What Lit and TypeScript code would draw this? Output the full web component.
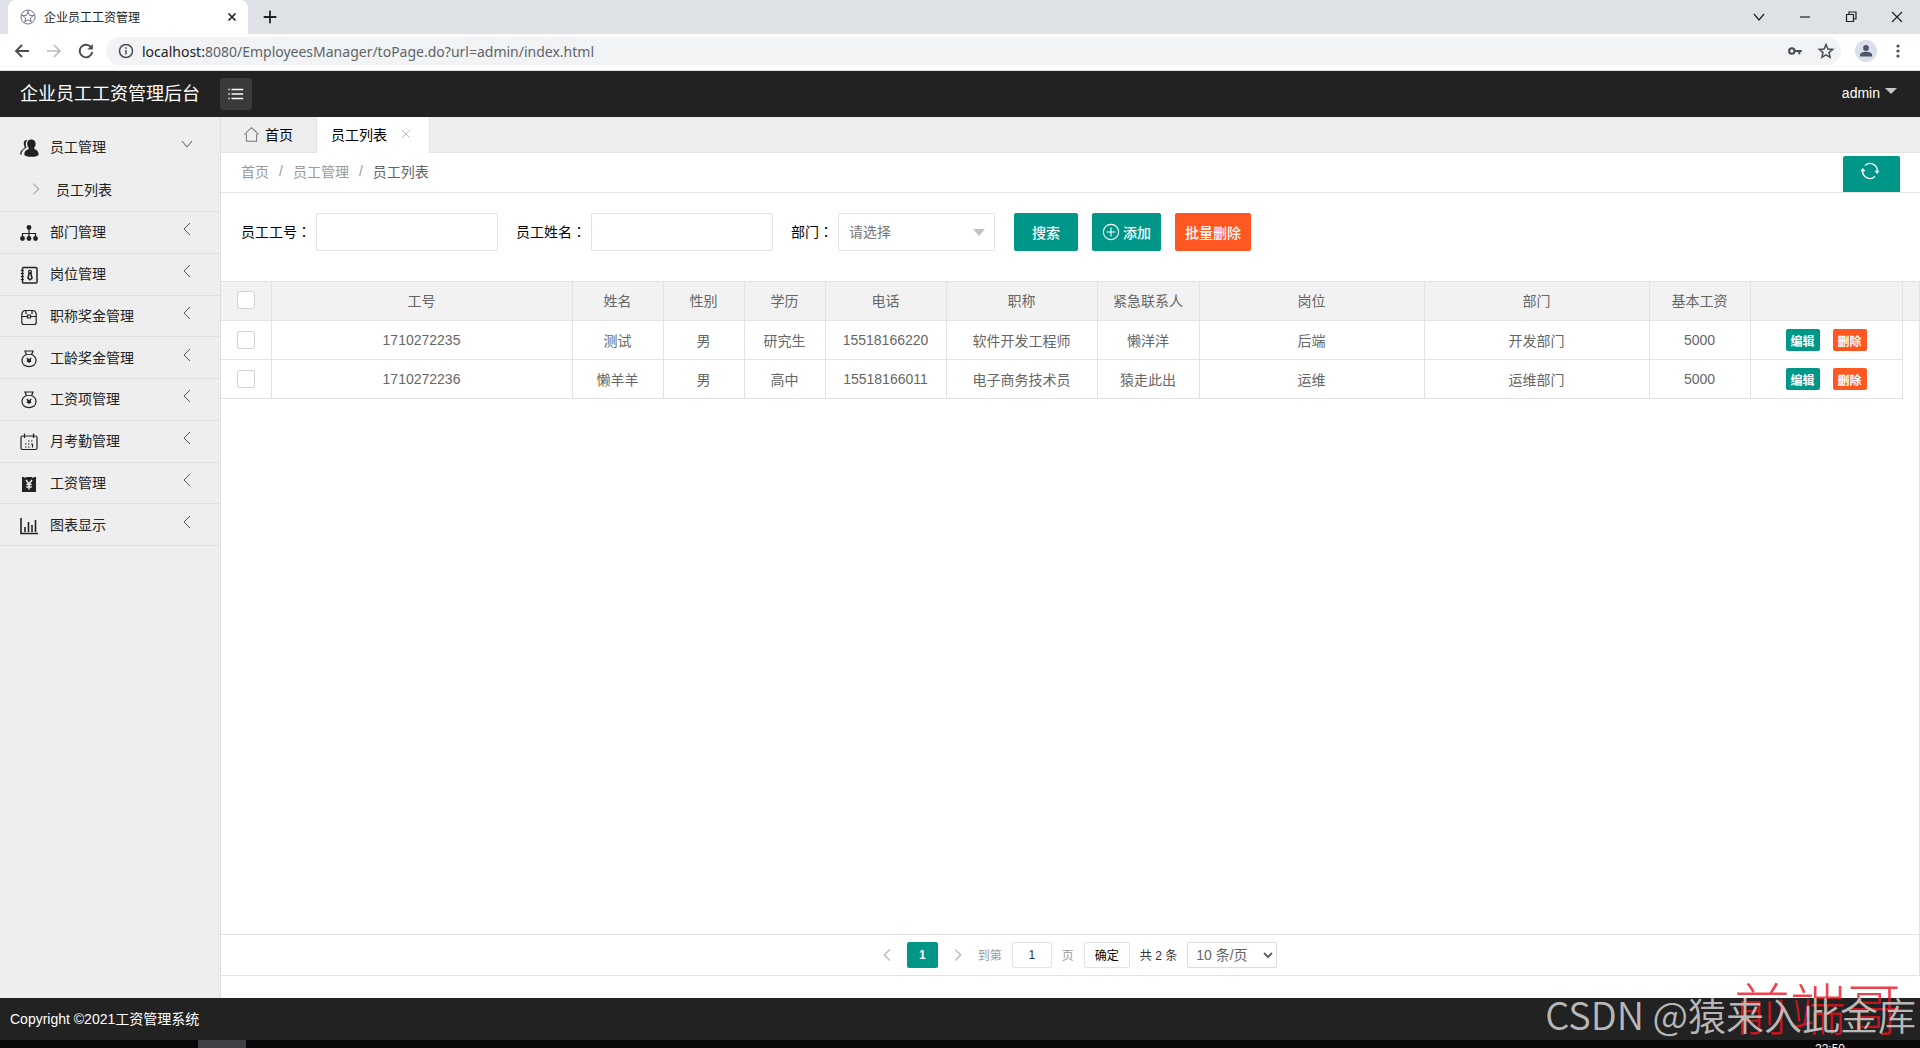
import { LitElement, html, svg, css } from "lit";
import { customElement, state } from "lit/decorators.js";

const stroke = (body: unknown, size = 20, width = 1.2) => html`<svg width=${size} height=${size} viewBox="0 0 20 20" fill="none" stroke="currentColor" stroke-width=${width} aria-hidden="true">${body}</svg>`;

const icons = {
  users: svg`<g fill="currentColor" stroke="none"><path d="M8.500 2C6 1.500 4.600 3 4.800 5.600c.1 1.700.4 2.700 1.100 3.600L4.200 11C1.500 12.500.9 14.800 1.200 16.500H2.600c0-3 1-4.600 3.300-5.800L7.600 9.600C6.300 7.500 6.200 4.300 8.500 2z"/><path d="M12.200 1.500c3.200 0 4.600 2.200 4.400 4.800-.1 1.600-.7 2.900-1.600 3.800.4 1.100 1.200 1.300 2.300 1.900 2 1.100 2.300 3 2.200 4.900-1.200 1.200-4 1.900-7 1.900-3.200 0-5.800-.7-7.200-1.900 0-2.500.3-4 2.500-5 1.200-.6 1.800-.8 2.100-1.900C8.900 9.100 8.300 7.900 8.200 6.300 8 3.700 9.200 1.500 12.200 1.500z"/></g>`,
  tree: svg`<path d="M10 5v10M3.500 14v-3.500h13V14"/><g fill="currentColor" stroke="none"><circle cx="10" cy="4.500" r="2.400"/><circle cx="3.500" cy="15.500" r="2.400"/><circle cx="10" cy="15.500" r="2.400"/><circle cx="16.500" cy="15.500" r="2.400"/></g>`,
  badge: svg`<rect x="3.500" y="2.500" width="14.500" height="15.500" rx="1" stroke-width="1.500"/><path d="M1.800 5.500h3M1.800 8.500h3M1.800 11.500h3M1.800 14.500h3"/><circle cx="11" cy="6.700" r="1.400"/><path d="M10.100 8.300h1.800l1.100 4.800-2 1.700-2-1.700z" stroke-width="1.600"/>`,
  box: svg`<path d="M5.500 3.500h9q2.700 1 2.700 4v8q0 2-2 2H4.800q-2 0-2-2v-8q0-3 2.700-4z"/><path d="M2.800 9.500h5.700m3 0h5.700M8.500 8h3v3h-3zM7 3.700v3.300m6-3.300v3.300"/>`,
  pouch: svg`<path d="M6 2h8l-1.400 3.500C15.500 6.800 17 9 17 11.600c0 3.800-3 6-7 6s-7-2.200-7-6c0-2.600 1.500-4.800 4.400-6.100z"/><path d="M8 5.500h4" stroke-width=".8"/><circle cx="10" cy="11.500" r="1.800" fill="currentColor" stroke="none"/><path d="m7.800 9 2.200 2.500L12.200 9M10 11.500V14M7.800 12.300h4.400"/>`,
  calendar: svg`<rect x="2" y="4" width="16" height="13.500" rx="1.500"/><path d="M5.500 1.500v4.500m9-4.500v4.500"/><path d="M9 9h1.500M12 9h1.500M6 12h1.500M9 12h1.500M12 12h1.500M6 15h1.500M9 15h1.500M13.500 12v3.500"/>`,
  money: svg`<path d="M3 3h2l1 1 1.300-1h5.400l1.300 1 1-1h2v15H3z" fill="currentColor" stroke="none"/><path d="m7 6 3 4 3-4M10 10v5.500M7.300 10.500h5.400M7.300 13h5.400" stroke="#eee" stroke-width="1.500"/>`,
  chart: svg`<path d="M2 2v15.500h17M6 16v-5M9.500 16V6M13 16V9M16.500 16V4" stroke-width="1.600"/>`,
};

const down = svg`<path d="m5 7 5 6 5-6"/>`;
const left = svg`<path d="m13 4-6 6 6 6"/>`;
const right = svg`<path d="m7 4 6 6-6 6"/>`;
const cross = svg`<path d="m5 5 10 10M15 5 5 15"/>`;

const menu = [
  ["部门管理", icons.tree], ["岗位管理", icons.badge], ["职称奖金管理", icons.box], ["工龄奖金管理", icons.pouch],
  ["工资项管理", icons.pouch], ["月考勤管理", icons.calendar], ["工资管理", icons.money], ["图表显示", icons.chart],
] as const;

const columns = ["工号", "姓名", "性别", "学历", "电话", "职称", "紧急联系人", "岗位", "部门", "基本工资"];
const employees = [
  ["1710272235", "测试", "男", "研究生", "15518166220", "软件开发工程师", "懒洋洋", "后端", "开发部门", "5000"],
  ["1710272236", "懒羊羊", "男", "高中", "15518166011", "电子商务技术员", "猿走此出", "运维", "运维部门", "5000"],
];

const base = css`
  * { box-sizing: border-box; }
  button, input, select { font: inherit; color: inherit; margin: 0; padding: 0; }
  button { border: 0; background: none; cursor: pointer; display: flex; align-items: center; justify-content: center; }
  a { color: inherit; text-decoration: none; }
  svg { display: block; flex: none; }
`;

@customElement("browser-bar")
class BrowserBar extends LitElement {
  static styles = [base, css`
    :host { display: block; }
    .strip { height: 34px; background: #dee1e6; display: flex; align-items: center; padding-left: 8px; color: #222; }
    .tab { width: 240px; height: 34px; background: #fff; border-radius: 8px 8px 0 0; display: flex; align-items: center; gap: 8px; padding: 0 9px 0 12px; font-size: 12px; }
    .tab span { flex: 1; padding-bottom: 2px; }
    .fav { color: #6c7196; }
    .plus { margin-left: 13px; }
    .window { margin-left: auto; display: flex; gap: 26px; padding-right: 13px; height: 28px; }
    .tools { height: 37px; background: #fff; display: flex; align-items: center; gap: 12px; padding: 0 12px 2px; color: #4a4d51; border-bottom: 1px solid #ddd; }
    .off { color: #b8babd; }
    .address { flex: 1; height: 28px; border-radius: 14px; background: #f1f3f4; display: flex; align-items: center; gap: 6px; padding: 0 5px 0 10px; margin-left: -2px; }
    .link { flex: 1; font: 14px "Noto Sans", sans-serif; color: #5f6368; }
    .link b { font-weight: 400; color: #202124; }
    .key { margin-right: 6px; }
    .avatar { margin: 0 -1px 0 2px; }
  `];

  render() {
    return html`
      <div class="strip">
        <div class="tab">
          <svg class="fav" width="16" height="16" viewBox="0 0 16 16" fill="none" stroke="currentColor"><circle cx="8" cy="8" r="7"/><path d="m8 3 1.500 3.300 3.500.4-2.600 2.400.7 3.600L8 10.900l-3.100 1.800.7-3.600L3 6.700l3.500-.4zM8 1v2M1.300 6 3 6.700M14.700 6 13 6.700M3.800 14l1.100-1.300M12.200 14l-1.100-1.300"/></svg>
          <span>企业员工工资管理</span>
          <button aria-label="关闭标签页">${stroke(cross, 14, 2.4)}</button>
        </div>
        <button class="plus" aria-label="新标签页">${stroke(svg`<path d="M10 3v14M3 10h14"/>`, 18, 2)}</button>
        <div class="window">
          <button aria-label="搜索标签页">${stroke(down, 20, 1.2)}</button>
          <button aria-label="最小化">${stroke(svg`<path d="M5 10h10"/>`, 20, 1.2)}</button>
          <button aria-label="还原">${stroke(svg`<path d="M5.500 7.500h7v7h-7zM8 7.500v-2.500h7v7h-2.500"/>`, 20, 1.2)}</button>
          <button aria-label="关闭">${stroke(cross, 20, 1.2)}</button>
        </div>
      </div>
      <div class="tools">
        <button aria-label="后退">${stroke(svg`<path d="M17 10H4M10 4l-6 6 6 6"/>`, 20, 1.9)}</button>
        <button class="off" aria-label="前进">${stroke(svg`<path d="M3 10h13M10 4l6 6-6 6"/>`, 20, 1.6)}</button>
        <button aria-label="刷新">${stroke(svg`<path d="M15.500 7A6.300 6.300 0 1 0 16.200 11"/><path d="M16.800 3v5.500h-5.500z" fill="currentColor" stroke="none"/>`, 20, 1.9)}</button>
        <div class="address">
          ${stroke(svg`<circle cx="10" cy="10" r="6.500"/><path d="M10 9v4.500M10 6.200v1.600"/>`, 20, 1.5)}
          <span class="link"><b>localhost:</b>8080/EmployeesManager/toPage.do?url=admin/index.html</span>
          <button class="key" aria-label="密码">${stroke(svg`<circle cx="6.500" cy="10" r="3" stroke-width="2.300"/><path d="M9.500 10h8M14.800 10v3.500" stroke-width="2.300"/>`, 18)}</button>
          <button aria-label="收藏">${stroke(svg`<path d="m10 3.500 1.900 4.500 4.800.4-3.700 3.200 1.100 4.700L10 13.800l-4.100 2.500L7 11.600 3.300 8.400 8.100 8z"/>`, 20, 1.5)}</button>
        </div>
        <button class="avatar" aria-label="用户"><svg width="22" height="22" viewBox="0 0 22 22"><circle cx="11" cy="11" r="11" fill="#d9dfeb"/><circle cx="11" cy="8" r="2.900" fill="#4d566b"/><path d="M5 16.500v-1.500c0-2 3-3.200 6-3.200s6 1.200 6 3.200v1.500z" fill="#4d566b"/></svg></button>
        <button aria-label="更多"><svg width="20" height="20" viewBox="0 0 20 20" fill="currentColor"><circle cx="10" cy="5" r="1.600"/><circle cx="10" cy="10" r="1.600"/><circle cx="10" cy="15" r="1.600"/></svg></button>
      </div>`;
  }
}

@customElement("side-menu")
class SideMenu extends LitElement {
  static styles = [base, css`
    :host { display: block; width: 221px; background: #eee; border-right: 1px solid #ddd; color: #222; font-size: 14px; }
    .group { padding-top: 8px; height: 95px; border-bottom: 1px solid #e0e0e0; }
    .list { display: grid; grid-auto-rows: 1fr; height: 334px; }
    .item { width: 100%; height: 100%; border-bottom: 1px solid #e0e0e0; gap: 11px; padding: 0 23px 0 19px; }
    .group .item { height: 44px; border: 0; }
    .label { flex: 1; text-align: left; padding-bottom: 2px; }
    .arrow { margin-bottom: 6px; color: #555; }
    .icon { margin-top: 2px; }
    .sub { display: flex; align-items: center; gap: 11px; height: 40px; padding-left: 27px; }
    .sub svg { color: #777; }
  `];

  render() {
    return html`<nav>
      <div class="group">
        <button class="item"><span class="icon">${stroke(icons.users)}</span><span class="label">员工管理</span><span class="arrow">${stroke(down, 20, 1)}</span></button>
        <a class="sub" href="#staff">${stroke(right, 18, 1)}员工列表</a>
      </div>
      <div class="list">
        ${menu.map(([name, icon]) => html`<button class="item"><span class="icon">${stroke(icon)}</span><span class="label">${name}</span><span class="arrow">${stroke(left, 20, 1)}</span></button>`)}
      </div>
    </nav>`;
  }
}

@customElement("staff-table")
class StaffTable extends LitElement {
  static styles = [base, css`
    :host { display: block; font-size: 14px; color: #666; }
    table { width: 100%; table-layout: fixed; border-collapse: collapse; }
    th, td { height: 39px; padding: 0; font-weight: 400; text-align: center; border: 1px solid #e3e3e3; white-space: nowrap; }
    th { background: #f2f2f2; padding-bottom: 2px; }
    tr > :first-child { border-left: 0; }
    th:last-child { border-right: 0; }
    td.pad { border: 0; }
    .check { width: 50px; } .id { width: 301px; } .name { width: 91px; } .short { width: 81px; } .phone { width: 121px; }
    .title { width: 151px; } .contact { width: 102px; } .pay { width: 101px; } .acts { width: 152px; } .gutter { width: 17px; }
    input { appearance: none; display: block; width: 18px; height: 18px; margin: 0 0 0 16px; border: 1px solid #d2d2d2; border-radius: 2px; background: #fff; }
    .buttons { display: flex; justify-content: center; gap: 13px; }
    .buttons button { width: 34px; height: 22px; border-radius: 2px; background: #009688; color: #fff; font-size: 12px; font-weight: 700; }
    .buttons .remove { background: #ff5722; }
  `];

  render() {
    return html`<table>
      <colgroup><col class="check"><col class="id"><col class="name"><col class="short"><col class="short"><col class="phone"><col class="title"><col class="contact"><col><col><col class="pay"><col class="acts"><col class="gutter"></colgroup>
      <thead><tr><th><input type="checkbox" aria-label="全选"></th>${columns.map((c) => html`<th>${c}</th>`)}<th></th><th></th></tr></thead>
      <tbody>${employees.map((row) => html`<tr>
        <td><input type="checkbox" aria-label=${"选择 " + row[0]}></td>${row.map((v) => html`<td>${v}</td>`)}
        <td><div class="buttons"><button>编辑</button><button class="remove">删除</button></div></td><td class="pad"></td>
      </tr>`)}</tbody>
    </table>`;
  }
}

@customElement("staff-page")
class StaffPage extends LitElement {
  @state() private pageNumber = "1";

  static styles = [base, css`
    :host { display: flex; flex-direction: column; min-width: 0; background: #fff; font-size: 14px; color: #222; }
    .tabs { display: flex; height: 36px; background: #eee; border-bottom: 1px solid #e2e2e2; }
    .tab { display: flex; align-items: center; gap: 5px; height: 36px; padding: 0 23px 2px 22px; border-right: 1px solid #e2e2e2; color: #000; }
    .tab.on { background: #fff; padding: 0 15px 2px 14px; gap: 11px; }
    .tab svg { color: #777; }
    .tab.on svg { color: #bbb; }
    .crumbs { display: flex; align-items: center; gap: 10px; height: 40px; border-bottom: 1px solid #e5e5e5; padding: 0 20px; color: #999; }
    .crumbs a, .crumbs span { padding-bottom: 3px; }
    .crumbs .here { color: #666; }
    .refresh { margin-left: auto; align-self: flex-end; width: 57px; height: 36px; border-radius: 2px 2px 0 0; background: #009688; color: #fff; padding: 0 3px 7px 0; }
    .search { display: flex; align-items: center; height: 88px; padding: 0 20px 10px; }
    .search label { margin-right: 5px; padding-bottom: 3px; color: #000; }
    .colon { font-family: "Noto Sans CJK TC", sans-serif; }
    .box { height: 38px; border: 1px solid #e2e2e2; border-radius: 2px; background: #fff; padding: 0 10px; outline: 0; }
    .box.text { width: 182px; margin-right: 18px; }
    .pick { display: grid; align-items: center; margin-right: 19px; }
    .pick > * { grid-area: 1 / 1; }
    .pick select { appearance: none; width: 157px; color: #777; }
    .pick svg { justify-self: end; margin-right: 10px; pointer-events: none; }
    .btn { height: 38px; border-radius: 2px; padding: 0 10px; margin-right: 14px; background: #009688; color: #fff; font-weight: 500; gap: 3px; }
    .btn.find { padding: 0 18px; }
    .btn.danger { background: #ff5722; }
    .grid { flex: 1; border-right: 1px solid #e3e3e3; }
    .pager { height: 42px; display: flex; align-items: center; justify-content: center; gap: 10px; border: 1px solid #e2e2e2; border-left: 0; font-size: 12px; padding: 0 0 1px 14px; color: #333; }
    .pager .soft { color: #999; }
    .pager .edge { color: #bbb; width: 20px; }
    .pager .now { width: 31px; height: 26px; border-radius: 2px; background: #009688; color: #fff; font-weight: 700; }
    .pager input { width: 40px; height: 26px; border: 1px solid #e2e2e2; border-radius: 2px; text-align: center; }
    .pager .ok { width: 46px; height: 26px; border: 1px solid #e2e2e2; border-radius: 2px; color: #000; }
    .pager select { width: 90px; height: 26px; border: 1px solid #ddd; border-radius: 2px; padding-left: 4px; font-size: 14px; color: #666; background: #fff; }
    .rest { height: 22px; }
  `];

  render() {
    return html`
      <div class="tabs">
        <a class="tab" href="#home">${stroke(svg`<path d="m1.500 10 8.500-8 8.500 8M4 9v9h12V9"/>`, 17, 1.2)}首页</a>
        <a class="tab on" href="#staff">员工列表 ${stroke(cross, 16, 1.2)}</a>
      </div>
      <div class="crumbs">
        <a href="#home">首页</a><span>/</span><a href="#group">员工管理</a><span>/</span><span class="here">员工列表</span>
        <button class="refresh" aria-label="刷新">${stroke(svg`<path d="M5 4.500A7.300 7.300 0 0 1 17.200 11M15 15.500A7.300 7.300 0 0 1 2.800 9"/><path d="m19.500 9.500-2.200 3.500L14.500 10zM.5 10.500 2.700 7l2.800 3z" fill="currentColor" stroke="none"/>`, 20, 1.3)}</button>
      </div>
      <form class="search" @submit=${(e: Event) => e.preventDefault()}>
        <label for="no">员工工号<span class="colon">：</span></label><input class="box text" id="no">
        <label for="name">员工姓名<span class="colon">：</span></label><input class="box text" id="name">
        <label for="dept">部门<span class="colon">：</span></label>
        <div class="pick"><select class="box" id="dept"><option>请选择</option><option>开发部门</option><option>运维部门</option></select><svg width="12" height="7" viewBox="0 0 12 7"><path d="M0 0h12L6 7z" fill="#c2c2c2"/></svg></div>
        <button class="btn find">搜索</button>
        <button class="btn" type="button">${stroke(svg`<circle cx="10" cy="10" r="8.500"/><path d="M10 5v10M5 10h10"/>`, 18, 1.2)}添加</button>
        <button class="btn danger" type="button">批量删除</button>
      </form>
      <div class="grid"><staff-table></staff-table></div>
      <div class="pager">
        <button class="edge" aria-label="上一页">${stroke(left, 18, 1.6)}</button>
        <button class="now">1</button>
        <button class="edge" aria-label="下一页">${stroke(right, 18, 1.6)}</button>
        <label class="soft" for="page">到第</label>
        <input id="page" .value=${this.pageNumber} @input=${(e: Event) => (this.pageNumber = (e.target as HTMLInputElement).value)}>
        <span class="soft">页</span>
        <button class="ok">确定</button>
        <span>共 2 条</span>
        <select aria-label="每页条数"><option>10 条/页</option><option>20 条/页</option></select>
      </div>
      <div class="rest"></div>`;
  }
}

@customElement("app-root")
class AppRoot extends LitElement {
  static styles = [base, css`
    :host { display: flex; flex-direction: column; position: relative; min-height: 100vh; overflow: hidden; background: #fff; font-family: "Liberation Sans", "Noto Sans CJK SC", sans-serif; }
    .top { height: 46px; background: #222; color: #fff; display: flex; align-items: center; padding: 0 23px 0 20px; }
    h1 { margin: 0; font-size: 18px; font-weight: 400; padding-bottom: 4px; }
    .fold { width: 32px; height: 32px; margin-left: 20px; border-radius: 3px; background: #3a3a3a; color: #fff; }
    .user { margin-left: auto; gap: 5px; font-size: 14px; color: #fff; padding-bottom: 2px; }
    .user svg { margin-bottom: 4px; }
    .main { flex: 1; display: grid; grid-template-columns: auto 1fr; }
    .foot { height: 42px; background: #222; color: #fff; display: flex; align-items: center; padding: 0 10px 2px; font-size: 14px; }
    .task { height: 8px; background: #08080b; display: flex; justify-content: space-between; overflow: hidden; padding: 0 75px 0 198px; color: #fff; font-size: 12px; line-height: 18px; }
    .task i { width: 48px; background: #414145; }
    .mark { position: absolute; white-space: nowrap; pointer-events: none; line-height: 1; font-family: "Noto Sans CJK SC", sans-serif; }
    .red { right: 18px; bottom: 14px; font-size: 56px; font-weight: 300; color: rgba(232, 20, 35, 0.8); }
    .grey { right: 4px; bottom: 15px; font-size: 38px; font-weight: 350; color: rgba(205, 205, 205, 0.9); }
  `];

  render() {
    return html`
      <browser-bar></browser-bar>
      <header class="top">
        <h1>企业员工工资管理后台</h1>
        <button class="fold" aria-label="折叠菜单">${stroke(svg`<path d="M5 5h13M5 10h13M5 15h13M1.500 5h1.500M1.500 10h1.500M1.500 15h1.500"/>`, 18, 1.6)}</button>
        <button class="user">admin <svg width="12" height="6" viewBox="0 0 12 6"><path d="M0 0h12L6 6z" fill="#c8c8c8"/></svg></button>
      </header>
      <div class="main"><side-menu></side-menu><staff-page></staff-page></div>
      <footer class="foot">Copyright ©2021工资管理系统</footer>
      <div class="task"><i></i><span>22:50</span></div>
      <div class="mark red">前端哥</div>
      <div class="mark grey">CSDN @猿来入此金库</div>`;
  }
}
